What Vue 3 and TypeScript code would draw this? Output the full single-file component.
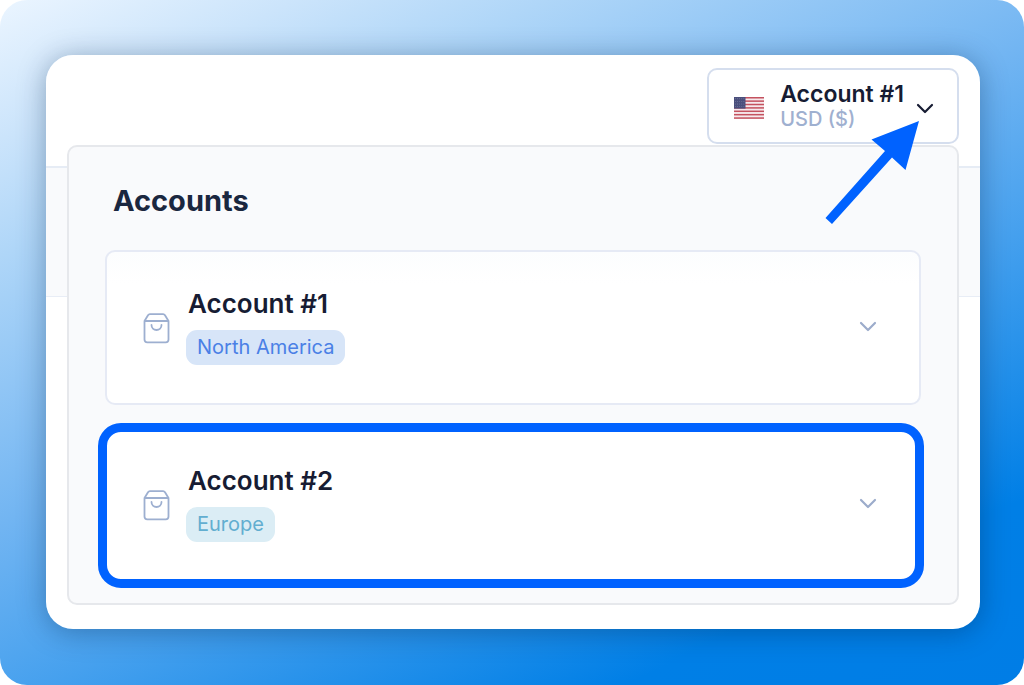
<script setup lang="ts">
import { ref } from 'vue'

interface Account {
  id: number
  name: string
  region: string
  tone: 'blue' | 'teal'
}

const accounts: Account[] = [
  { id: 1, name: 'Account #1', region: 'North America', tone: 'blue' },
  { id: 2, name: 'Account #2', region: 'Europe', tone: 'teal' },
]
const highlighted = ref(2)
const stripes = [0, 2, 4, 6, 8, 10, 12]
</script>

<template>
  <main class="stage">
    <section class="window">
      <header class="bar">
        <button class="switcher" type="button" aria-haspopup="true" aria-expanded="true">
          <svg class="flag" viewBox="0 0 30 22" aria-hidden="true">
            <rect width="30" height="22" fill="#f6e9ec" />
            <rect v-for="s in stripes" :key="s" x="0" :y="(s * 22) / 13" width="30" height="1.5" fill="#c4525f" />
            <rect width="11.5" height="11.6" fill="#4a4f7c" />
            <g fill="#8f93b3">
              <circle v-for="n in 20" :key="n" :cx="1.5 + ((n - 1) % 5) * 2.1" :cy="1.8 + Math.floor((n - 1) / 5) * 2.6" r=".45" />
            </g>
          </svg>
          <span class="who">
            <span class="name">Account #1</span>
            <span class="currency">USD ($)</span>
          </span>
          <svg class="chevron dark" viewBox="0 0 18 12" aria-hidden="true">
            <path d="M2 2l7 7 7-7" />
          </svg>
        </button>
        <svg class="pointer" viewBox="0 0 96 106" aria-hidden="true">
          <path d="M94 1L46.500 19.500L60 31L0.500 98L7 104L67 37.500L80.500 50Z" fill="#0062ff" />
        </svg>
      </header>

      <div class="panel">
        <h2 class="heading">Accounts</h2>
        <ul class="list">
          <li v-for="a in accounts" :key="a.id">
            <button class="row" :class="{ marked: a.id === highlighted }" type="button" @click="highlighted = a.id">
              <svg class="bag" viewBox="0 0 28 32" aria-hidden="true">
                <path d="M1.500 9L5 3.300Q5.700 2.200 6.900 2.200H20.100Q21.300 2.200 22 3.300L25.500 9V27.500Q25.500 30.300 22.700 30.300H4.300Q1.500 30.300 1.500 27.500ZM1.500 9H25.500M8.500 13a5 5 0 0 0 10 0" />
              </svg>
              <span class="info">
                <span class="title">{{ a.name }}</span>
                <span class="badge" :class="a.tone">{{ a.region }}</span>
              </span>
              <svg class="chevron" viewBox="0 0 18 12" aria-hidden="true">
                <path d="M2 2l7 7 7-7" />
              </svg>
            </button>
          </li>
        </ul>
      </div>
    </section>
  </main>
</template>

<style>
body {
  margin: 0;
  background: #fff;
}
</style>

<style scoped>
.stage {
  box-sizing: border-box;
  min-height: 100vh;
  padding: 55px 44px 55px 46px;
  border-radius: 27px;
  background: linear-gradient(155deg, #ebf5ff 0%, #cbe4fb 12%, #afd6f8 22%, #72b5f2 45%, #45a0ee 61%, #007fe6 84%, #007de6 100%);
  font-family: Inter, "Liberation Sans", sans-serif;
}
.window {
  padding: 13px 21px 24px;
  border-radius: 27px;
  background: linear-gradient(#fff 111px, #e6ecf5 111px, #e6ecf5 113px, #f9fafc 113px, #f9fafc 241px, #e8edf6 241px, #e8edf6 242px, #fff 242px);
  box-shadow: 0 3px 28px rgba(0, 35, 75, 0.36);
}
.bar {
  position: relative;
  display: flex;
  justify-content: flex-end;
}
.switcher {
  display: flex;
  align-items: center;
  height: 76px;
  padding: 0 23px 0 25px;
  border: 2px solid #d5deee;
  border-radius: 10px;
  background: #fff;
  font: inherit;
  text-align: left;
}
.flag {
  width: 30px;
  height: 22px;
  margin: 4px 16px 0 0;
}
.who {
  display: flex;
  flex-direction: column;
  padding-top: 2px;
}
.name {
  color: #171c33;
  font-size: 23px;
  font-weight: 600;
  line-height: 25px;
}
.currency {
  color: #9fb0d0;
  font-size: 20px;
  font-weight: 500;
  line-height: 25px;
}
.chevron {
  width: 18px;
  height: 12px;
  fill: none;
  stroke: #9caccb;
  stroke-width: 2.200;
  stroke-linecap: round;
  stroke-linejoin: round;
}
.dark {
  margin: 6px 0 0 12px;
  stroke: #171c33;
}
.pointer {
  position: absolute;
  z-index: 1;
  top: 52px;
  right: 38px;
  width: 96px;
  height: 106px;
  pointer-events: none;
}
.panel {
  margin-top: 1px;
  padding: 36px 36px 21px;
  border: 2px solid #e6e8ec;
  border-radius: 10px;
  background: #f9fafc;
}
.heading {
  margin: 0 0 31px 8px;
  color: #1a2740;
  font-size: 29px;
  font-weight: 700;
  line-height: 36px;
}
.list {
  display: grid;
  gap: 22px;
  margin: 0;
  padding: 0;
  list-style: none;
}
.row {
  position: relative;
  display: flex;
  box-sizing: border-box;
  align-items: center;
  width: 100%;
  height: 155px;
  padding: 0 42px 2px 36px;
  border: 2px solid #e6eaf5;
  border-radius: 10px;
  background: linear-gradient(#fcfdfe, #fff 32px);
  font: inherit;
  text-align: left;
}
.marked {
  border-color: #fff;
  background: #fff;
}
.marked::after {
  content: "";
  position: absolute;
  inset: -6px -5px -8px -9px;
  border: 9px solid #0062ff;
  border-radius: 23px;
}
.bag {
  width: 28px;
  height: 32px;
  margin: 2px 15px 0 0;
  fill: none;
  stroke: #9dafd0;
  stroke-width: 1.800;
  stroke-linejoin: round;
  stroke-linecap: round;
}
.info {
  display: flex;
  flex: 1;
  flex-direction: column;
  align-items: flex-start;
  gap: 10px;
}
.title {
  margin-left: 2px;
  color: #171c33;
  font-size: 26px;
  font-weight: 600;
  line-height: 32px;
}
.badge {
  padding: 0 11px;
  border-radius: 11px;
  font-size: 20px;
  font-weight: 400;
  line-height: 35px;
}
.blue {
  background: #d7e5f8;
  color: #4a80e6;
}
.teal {
  background: #dbedf5;
  color: #62aed0;
}
</style>
